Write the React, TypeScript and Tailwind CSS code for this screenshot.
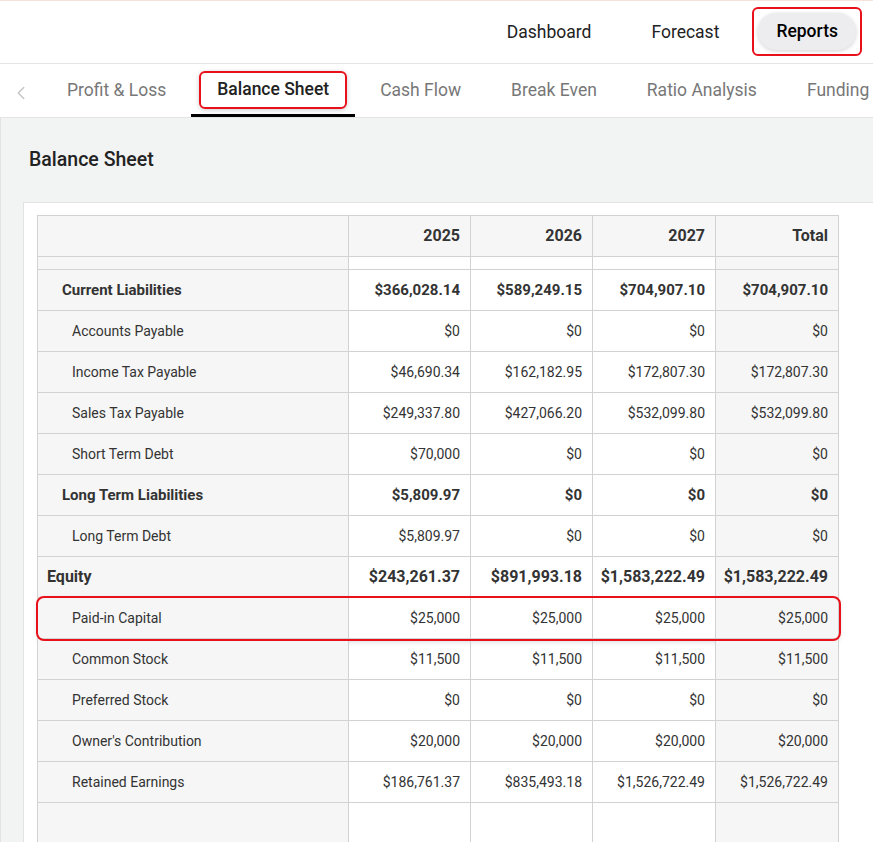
import { ChevronLeft } from 'lucide-react';

type Row = {
  label: string;
  values: string[];
  kind: 'group' | 'item' | 'section';
  highlight?: boolean;
};

const rows: Row[] = [
  { label: 'Current Liabilities', kind: 'group', values: ['$366,028.14', '$589,249.15', '$704,907.10', '$704,907.10'] },
  { label: 'Accounts Payable', kind: 'item', values: ['$0', '$0', '$0', '$0'] },
  { label: 'Income Tax Payable', kind: 'item', values: ['$46,690.34', '$162,182.95', '$172,807.30', '$172,807.30'] },
  { label: 'Sales Tax Payable', kind: 'item', values: ['$249,337.80', '$427,066.20', '$532,099.80', '$532,099.80'] },
  { label: 'Short Term Debt', kind: 'item', values: ['$70,000', '$0', '$0', '$0'] },
  { label: 'Long Term Liabilities', kind: 'group', values: ['$5,809.97', '$0', '$0', '$0'] },
  { label: 'Long Term Debt', kind: 'item', values: ['$5,809.97', '$0', '$0', '$0'] },
  { label: 'Equity', kind: 'section', values: ['$243,261.37', '$891,993.18', '$1,583,222.49', '$1,583,222.49'] },
  { label: 'Paid-in Capital', kind: 'item', highlight: true, values: ['$25,000', '$25,000', '$25,000', '$25,000'] },
  { label: 'Common Stock', kind: 'item', values: ['$11,500', '$11,500', '$11,500', '$11,500'] },
  { label: 'Preferred Stock', kind: 'item', values: ['$0', '$0', '$0', '$0'] },
  { label: "Owner's Contribution", kind: 'item', values: ['$20,000', '$20,000', '$20,000', '$20,000'] },
  { label: 'Retained Earnings', kind: 'item', values: ['$186,761.37', '$835,493.18', '$1,526,722.49', '$1,526,722.49'] },
];

const tabs = ['Profit & Loss', 'Balance Sheet', 'Cash Flow', 'Break Even', 'Ratio Analysis', 'Funding'];

export default function App() {
  return (
    <div className="w-[873px] h-[842px] overflow-hidden bg-white text-[#222] font-['Roboto',sans-serif]">
      {/* top nav */}
      <div className="h-[64px] border-t border-t-[#f6e3dc] border-b border-b-[#e4e4e4] flex items-center justify-end pr-[11px]">
        <div className="flex items-center text-[17.5px]">
          <span className="mr-[60px]">Dashboard</span>
          <span className="mr-[33px]">Forecast</span>
          <div className="rounded-[6px] border-2 border-[#e8101a] p-[4px] mt-[-2px]">
            <div className="rounded-full bg-[#ededf0] shadow-[0_1px_4px_rgba(0,0,0,0.18)] px-[18px] h-[37px] flex items-center font-medium text-black">
              Reports
            </div>
          </div>
        </div>
      </div>

      {/* tabs */}
      <div className="h-[54px] border-b border-[#e4e4e4] flex items-stretch overflow-hidden">
        <div className="w-[42px] shrink-0 flex items-center justify-center pt-[4px]">
          <ChevronLeft size={22} strokeWidth={1.5} className="text-[#c4c4c4]" />
        </div>
        <div className="flex items-stretch text-[17.5px] text-[#777] whitespace-nowrap">
          {tabs.map((t) => {
            const active = t === 'Balance Sheet';
            return (
              <div
                key={t}
                className={`shrink-0 flex items-center border-b-[3px] ${active ? 'border-black px-[8px]' : 'border-transparent px-[25px]'}`}
              >
                {active ? (
                  <div className="rounded-[6px] border-2 border-[#e8101a] h-[38px] flex items-center px-[16px] shadow-[0_1px_5px_rgba(0,0,0,0.2)] text-[#222] font-medium mt-[1px]">
                    {t}
                  </div>
                ) : (
                  <span className="mt-[2px]">{t}</span>
                )}
              </div>
            );
          })}
        </div>
      </div>

      {/* content */}
      <div className="bg-[#f2f3f3] border-l border-[#e2e2e2] h-full pl-[22px]">
        <div className="h-[84px] flex items-center pl-[6px] text-[19.5px] font-medium text-[#222]">
          Balance Sheet
        </div>
        <div className="bg-white border-l border-t border-[#e2e2e2] pl-[13px] pt-[12px] h-full">
          <table className="border-collapse w-[801px] table-fixed text-[#333]">
            <colgroup>
              <col className="w-[311px]" />
              <col className="w-[122px]" />
              <col className="w-[122px]" />
              <col className="w-[123px]" />
              <col className="w-[123px]" />
            </colgroup>
            <thead>
              <tr className="h-[41px] bg-[#f6f6f6] text-[16px] font-bold">
                <th className="border border-[#d2d2d2]" />
                <th className="border border-[#d2d2d2] text-right pr-[10px]">2025</th>
                <th className="border border-[#d2d2d2] text-right pr-[10px]">2026</th>
                <th className="border border-[#d2d2d2] text-right pr-[10px]">2027</th>
                <th className="border border-[#d2d2d2] text-right pr-[10px]">Total</th>
              </tr>
            </thead>
            <tbody>
              <tr className="h-[13px]">
                <td className="border border-[#d2d2d2] bg-[#f6f6f6]" />
                <td className="border border-[#d2d2d2]" />
                <td className="border border-[#d2d2d2]" />
                <td className="border border-[#d2d2d2]" />
                <td className="border border-[#d2d2d2] bg-[#f6f6f6]" />
              </tr>
              {rows.map((r) => {
                const labelCls =
                  r.kind === 'section'
                    ? 'pl-[9px] text-[16px] font-bold'
                    : r.kind === 'group'
                      ? 'pl-[24px] text-[15px] font-bold'
                      : 'pl-[34px] text-[14px]';
                const valCls =
                  r.kind === 'section'
                    ? 'text-[16px] font-bold'
                    : r.kind === 'group'
                      ? 'text-[15px] font-bold'
                      : 'text-[14px]';
                return (
                  <tr
                    key={r.label}
                    className={`h-[41px] ${r.highlight ? 'outline-2 outline-[#e8101a] rounded-[6px] shadow-[0_2px_6px_rgba(0,0,0,0.18)]' : ''}`}
                  >
                    <td className={`border border-[#d2d2d2] bg-[#f6f6f6] ${labelCls}`}>{r.label}</td>
                    {r.values.map((v, i) => (
                      <td
                        key={i}
                        className={`border border-[#d2d2d2] text-right pr-[10px] ${valCls} ${i === 3 ? 'bg-[#f6f6f6]' : ''}`}
                      >
                        {v}
                      </td>
                    ))}
                  </tr>
                );
              })}
              <tr className="h-[60px]">
                <td className="border border-[#d2d2d2] bg-[#f6f6f6]" />
                <td className="border border-[#d2d2d2]" />
                <td className="border border-[#d2d2d2]" />
                <td className="border border-[#d2d2d2]" />
                <td className="border border-[#d2d2d2] bg-[#f6f6f6]" />
              </tr>
            </tbody>
          </table>
        </div>
      </div>
    </div>
  );
}
